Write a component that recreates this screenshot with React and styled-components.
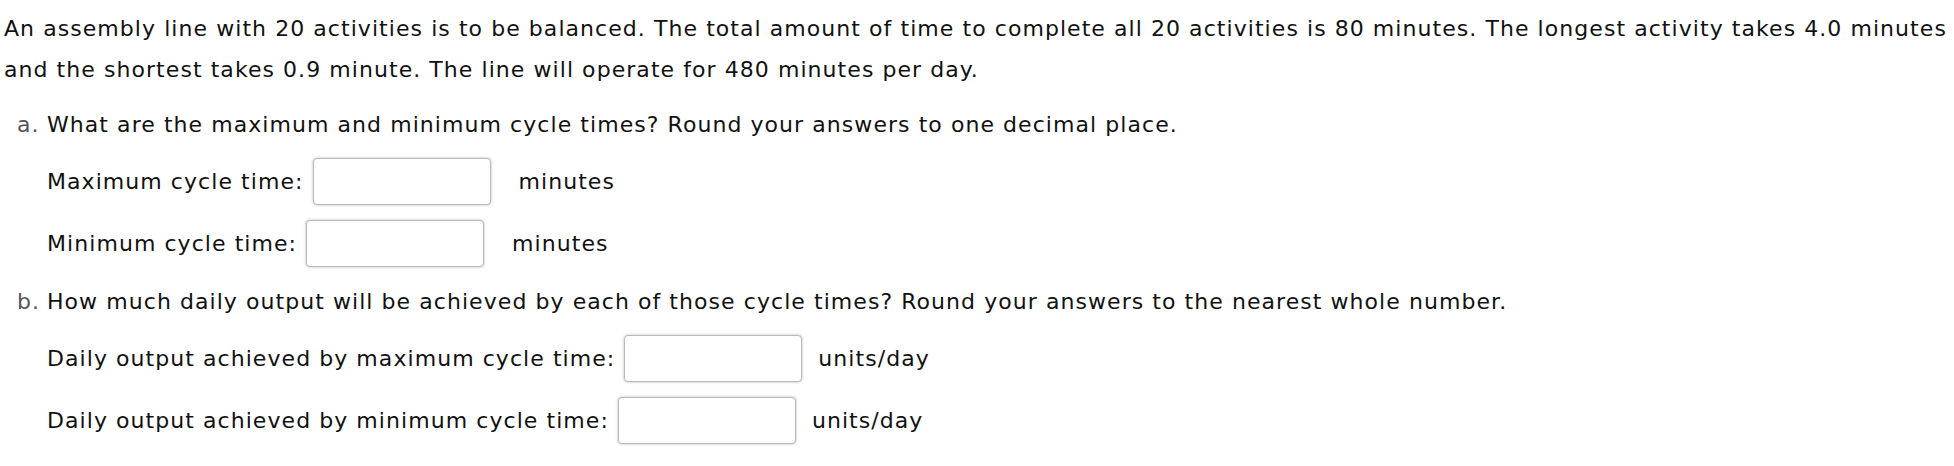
import React from "react";
import styled, { createGlobalStyle } from "styled-components";

const Global = createGlobalStyle`
  html, body { margin: 0; padding: 0; background: #fff; }
  body { font-family: "DejaVu Sans", Verdana, sans-serif; color: #111; }
`;

const Page = styled.div`
  padding: 8px 0 20px 4px;
  font-size: 22px;
  line-height: 41px;
  letter-spacing: 1.06px;
`;

const Intro = styled.p`
  margin: 0;
`;

const Questions = styled.ol`
  list-style: none;
  margin: 0;
  padding: 0;
`;

const Question = styled.li`
  margin-top: 14px;
`;

const Prompt = styled.div`
  display: flex;
  align-items: baseline;
`;

const Marker = styled.span`
  width: 30px;
  padding-left: 13px;
  color: #555;
  flex: none;
`;

const PromptText = styled.span``;

const Rows = styled.div`
  display: flex;
  flex-direction: column;
  gap: 15px;
  margin-top: 13px;
  padding-left: 43px;
`;

const Row = styled.div`
  display: flex;
  align-items: center;
`;

const Label = styled.label`
  margin-right: 9px;
`;

const Field = styled.input`
  box-sizing: border-box;
  width: 178px;
  height: 47px;
  border: 1px solid #b9b9b9;
  border-radius: 4px;
  box-shadow: 0 0 3px rgba(0, 0, 0, 0.28);
  background: #fff;
  font: inherit;
  padding: 0 8px;
  outline: none;
`;

const Unit = styled.span`
  margin-left: ${(p) => p.$gap}px;
`;

const parts = [
  {
    marker: "a.",
    text: "What are the maximum and minimum cycle times? Round your answers to one decimal place.",
    rows: [
      { label: "Maximum cycle time:", unit: "minutes", gap: 28 },
      { label: "Minimum cycle time:", unit: "minutes", gap: 28 },
    ],
  },
  {
    marker: "b.",
    text: "How much daily output will be achieved by each of those cycle times? Round your answers to the nearest whole number.",
    rows: [
      { label: "Daily output achieved by maximum cycle time:", unit: "units/day", gap: 16 },
      { label: "Daily output achieved by minimum cycle time:", unit: "units/day", gap: 16 },
    ],
  },
];

export default function App() {
  return (
    <>
      <Global />
      <Page>
        <Intro>
          An assembly line with 20 activities is to be balanced. The total amount of time to
          complete all 20 activities is 80 minutes. The longest activity takes 4.0 minutes and the
          shortest takes 0.9 minute. The line will operate for 480 minutes per day.
        </Intro>
        <Questions>
          {parts.map((q) => (
            <Question key={q.marker}>
              <Prompt>
                <Marker>{q.marker}</Marker>
                <PromptText>{q.text}</PromptText>
              </Prompt>
              <Rows>
                {q.rows.map((r) => (
                  <Row key={r.label}>
                    <Label>{r.label}</Label>
                    <Field type="text" aria-label={r.label} />
                    <Unit $gap={r.gap}>{r.unit}</Unit>
                  </Row>
                ))}
              </Rows>
            </Question>
          ))}
        </Questions>
      </Page>
    </>
  );
}
